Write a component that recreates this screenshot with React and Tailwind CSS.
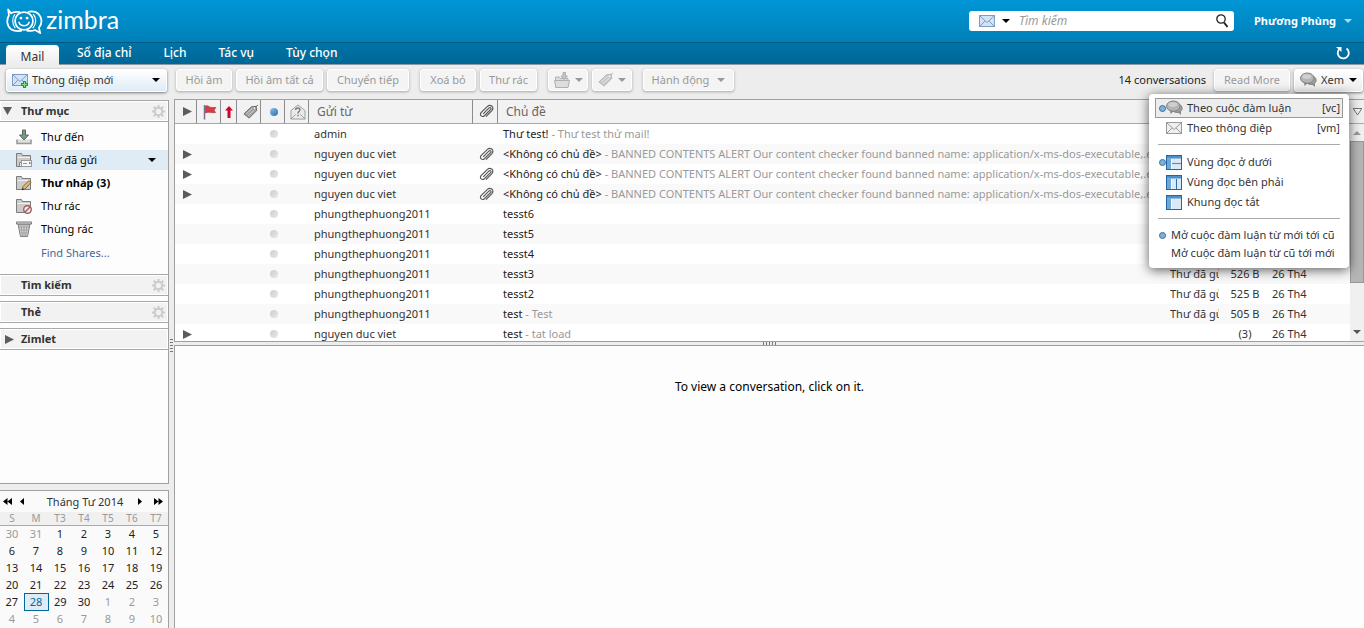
import { useState } from "react";

const stroke = { fill: "none", stroke: "currentColor" };

function Logo() {
  return (
    <svg width="37" height="26" viewBox="0 0 37 27" {...stroke} className="text-white" aria-hidden="true">
      <circle cx="18" cy="13.500" r="9.300" strokeWidth="1.800" />
      <path d="M14 4.300C10 3.600 6.500 4 4.500 5.500L1.500 1.500L2.300 7.500C-.5 12.500 .2 19 4.500 22C8 24.300 12 24.200 16 23.600" strokeWidth="1.800" strokeLinejoin="round" />
      <path d="M22 4.200C27 2.200 33 4.300 35 9C36.800 13 36 17.500 33.500 20.500L34.800 26L29.500 22.800C27 23.900 23.500 24 20.500 23.200" strokeWidth="1.800" strokeLinejoin="round" />
      <path d="M8.500 6.500C5.500 10 5.500 17 9 21M27.500 6.500C31 10 31 17 27 21" strokeWidth="1.200" />
      <circle cx="14.800" cy="10.500" r="1.500" fill="currentColor" stroke="none" />
      <circle cx="21.200" cy="10.500" r="1.500" fill="currentColor" stroke="none" />
      <path d="M12.800 15C14.500 19.500 21.500 19.500 23.200 15" strokeWidth="1.700" strokeLinecap="round" />
    </svg>
  );
}

function Envelope({ gray = false, plus = false }) {
  const line = gray ? "#9a9a9a" : "#7f9dc2";
  return (
    <svg width="16" height="16" viewBox="0 0 16 16" fill="none" aria-hidden="true">
      <rect x=".5" y="2.500" width="15" height="11" fill={gray ? "#efefef" : "#d3e3f6"} stroke={line} />
      <path d="M1 3L8 9.500L15 3M1 13L6 8M15 13L10 8" stroke={line} />
      {plus && <path d="M12.500 9v7M9 12.500h7" stroke="#1f9a35" strokeWidth="3.200" />}
      {plus && <path d="M12.500 10v5M10 12.500h5" stroke="#7ee37c" strokeWidth="1" />}
    </svg>
  );
}

function Down({ className = "" }) {
  return <svg width="8" height="4" viewBox="0 0 8 4" className={`shrink-0 ${className}`} aria-hidden="true"><path d="M0 0h8L4 4z" fill="currentColor" /></svg>;
}

function Right({ className = "" }) {
  return <svg width="9" height="9" viewBox="0 0 9 9" className={`shrink-0 text-[#5c5c5c] ${className}`} aria-hidden="true"><path d="M0 0L9 4.500L0 9z" fill="currentColor" /></svg>;
}

function Gear() {
  return (
    <svg width="13" height="13" viewBox="0 0 13 13" fill="none" stroke="#c9cbcd" aria-hidden="true">
      <circle cx="6.500" cy="6.500" r="3.700" strokeWidth="2" />
      <path d="M6.500 0v2.500M6.500 10.500V13M0 6.500h2.500M10.500 6.500H13M1.700 1.700l1.800 1.800M9.500 9.500l1.800 1.800M1.700 11.300l1.800-1.800M9.500 3.500l1.800-1.800" strokeWidth="2" />
    </svg>
  );
}

function Clip() {
  return (
    <svg width="15" height="15" viewBox="0 0 16 16" {...stroke} stroke="#555" strokeWidth="1.200" aria-hidden="true">
      <path d="M4.500 10.500L10.500 4.500C12 3 13.700 4.600 12.300 6L5.800 12.500C3.500 14.500 0 12 2.200 9.300L9 2.500C12-.2 16.500 3 14 6.700L7.500 13.500" />
    </svg>
  );
}

function Tag({ light = false }) {
  return (
    <svg width="16" height="16" viewBox="0 0 17 16" fill="none" aria-hidden="true">
      <path d="M1 10L9 2.500L14 2L14.500 6.500L6.500 14.500z" fill={light ? "#c9c9c9" : "#a0a0a0"} stroke={light ? "#b0b0b0" : "#666"} />
      <path d="M3.500 10L10 4M5.500 12L12 6" stroke={light ? "#e4e4e4" : "#cdcdcd"} />
      <circle cx="12.300" cy="3.800" r="1" fill="#fff" />
      <path d="M12.500 3.500L16 .5" stroke={light ? "#b5b5b5" : "#666"} />
    </svg>
  );
}

function Chat() {
  return (
    <svg width="17" height="16" viewBox="0 0 17 16" aria-hidden="true">
      <ellipse cx="11" cy="8.300" rx="5.200" ry="4.200" fill="#a2a2a2" stroke="#777" strokeWidth=".8" />
      <path d="M11.500 12L15 15V11z" fill="#8a8a8a" />
      <ellipse cx="7.300" cy="6.200" rx="6.800" ry="5.200" fill="#b4b4b4" stroke="#777" strokeWidth=".9" />
      <path d="M4 10.500L4.500 14L8 11z" fill="#8a8a8a" />
      <ellipse cx="6.800" cy="4.600" rx="4.500" ry="2.300" fill="#cfcfcf" />
    </svg>
  );
}

function Folder({ kind }) {
  if (kind === "inbox")
    return (
      <svg width="16" height="16" viewBox="0 0 16 16" aria-hidden="true">
        <path d="M1 10.500v4h14v-4" fill="#ddd" stroke="#9a9a9a" strokeWidth="1.600" />
        <path d="M6.500 1h3v5h3L8 11L3.500 6h3z" fill="#7d9985" stroke="#566e5e" />
      </svg>
    );
  if (kind === "trash")
    return (
      <svg width="16" height="16" viewBox="0 0 16 16" aria-hidden="true">
        <path d="M2 3l2.500 12.500h7L14 3z" fill="#cdcdcd" stroke="#808080" />
        <path d="M5 4l1.500 11M8 4v11M11 4L9.500 15M3 6h10M4 9h8.500M4.500 12h7" stroke="#999" strokeWidth=".7" />
        <path d="M.5 1h15v2H.5z" fill="#e4e4e4" stroke="#777" />
      </svg>
    );
  return (
    <svg width="16" height="16" viewBox="0 0 16 16" aria-hidden="true">
      <path d="M.5 14.500v-13h5l1 2h8v11z" fill="#cbcbcb" stroke="#7c7c7c" />
      <path d="M1.500 5.500h12.500" stroke="#f0f0f0" />
      {kind === "sent" && <g><path d="M3.500 14.500v-4h9" fill="#e8e8e8" stroke="#888" /><rect x="5.500" y="8.500" width="10" height="6" fill="#f8f8f8" stroke="#999" /><path d="M7 11.500h4" stroke="#8195b5" /><path d="M13 10h1.500v2H13z" fill="#4e88c0" /></g>}
      {kind === "draft" && <g><path d="M6 15l1-3.500L13 5.500l2 2L9 14z" fill="#e0b970" stroke="#67502e" strokeWidth=".8" /><path d="M6 15l2.200-.7L6.800 13z" fill="#222" /></g>}
      {kind === "spam" && <g><circle cx="11.500" cy="11.500" r="3.800" fill="#eee" stroke="#a45b5b" strokeWidth="1.400" /><path d="M14 9L9 14" stroke="#a45b5b" strokeWidth="1.400" /></g>}
    </svg>
  );
}

function Pane({ kind }) {
  return (
    <svg width="16" height="15" viewBox="0 0 16 15" aria-hidden="true">
      <rect x=".5" y=".5" width="15" height="14" fill="#dbe9f7" stroke="#2266a3" />
      <path d="M1 1h14v2.500H1z" fill="#4b91cd" />
      <path d="M1 3.500h4.500V14H1z" fill="#6aa9d6" />
      {kind === "bottom" && <path d="M6 8.500h9" stroke="#5b8fbd" strokeWidth="1.200" />}
      {kind === "right" && <path d="M10.500 4v10" stroke="#2d70ac" />}
      <path d="M5.500 4v10" stroke="#fff" />
    </svg>
  );
}

function Radio({ on }) {
  return <span className={`size-[7px] shrink-0 rounded-full ${on ? "border border-[#3f6c93] bg-[#7db2de]" : ""}`} />;
}

const btn = "flex h-[22px] shrink-0 items-center justify-center rounded-[3px] border border-white bg-[#f4f4f4] text-[#999] shadow-[0_1px_3px_rgba(0,0,0,0.3)]";

function Toolbar() {
  return (
    <div className="flex h-[34px] shrink-0 items-center justify-between bg-[#ededed] pr-px pb-1 pl-1.5">
      <div className="flex items-center gap-1">
        <button className="mr-[5px] flex h-[23px] w-[161px] items-center rounded-[3px] border border-white bg-linear-to-b from-white to-[#deebf6] pr-1.5 pl-[5px] text-[#333] shadow-[0_1px_3px_rgba(0,0,0,0.5)]">
          <Envelope plus />
          <span className="ml-1 flex-1 text-left">Thông điệp mới</span>
          <Down className="text-black" />
        </button>
        <button className={`${btn} w-[56px]`}>Hồi âm</button>
        <button className={`${btn} w-[87px]`}>Hồi âm tất cả</button>
        <button className={`${btn} mr-[7px] w-[82px]`}>Chuyển tiếp</button>
        <button className={`${btn} w-[56px]`}>Xoá bỏ</button>
        <button className={`${btn} mr-[7px] w-[57px]`}>Thư rác</button>
        <button aria-label="Di chuyển" className={`${btn} w-[40px] gap-1`}>
          <svg width="17" height="16" viewBox="0 0 17 16" fill="#ddd" stroke="#b0b0b0" aria-hidden="true">
            <path d="M1.500 15V5h4l1 1.500h7.500V15z" /><path d="M.5 8.500h15L14 15.500H2z" /><path d="M9 .5h2.500V4h2L10.200 7.500L7 4h2z" fill="#c5c5c5" />
          </svg>
          <Down />
        </button>
        <button aria-label="Gắn thẻ" className={`${btn} mr-[7px] w-[40px] gap-1`}><Tag light /><Down /></button>
        <button className={`${btn} w-[91px] gap-2`}>Hành động<Down /></button>
      </div>
      <div className="flex items-center gap-1">
        <span className="mr-1 text-[#222]">14 conversations</span>
        <button className={`${btn} w-[76px]`}>Read More</button>
        <button className="flex h-[23px] w-[69px] items-center rounded-[3px] border border-white bg-linear-to-b from-white to-[#ececec] px-[5px] text-[#333] shadow-[0_1px_3px_rgba(0,0,0,0.5)]">
          <Chat /><span className="ml-1 flex-1 text-left">Xem</span><Down className="text-black" />
        </button>
      </div>
    </div>
  );
}

const folders = [
  ["inbox", "Thư đến"],
  ["sent", "Thư đã gửi"],
  ["draft", "Thư nháp (3)"],
  ["spam", "Thư rác"],
  ["trash", "Thùng rác"],
];

function SectionHead({ label, arrow, gear }) {
  return (
    <h2 className="flex h-[22px] shrink-0 items-center border-y border-[#a9a9a9] bg-[#f2f2f2] pr-[3px] pl-[5px] font-bold text-[#333] shadow-[inset_0_0_0_1px_#fff]">
      <span className="flex w-4 items-center">
        {arrow === "down" && <svg width="9" height="8" viewBox="0 0 9 8" aria-hidden="true" className="-ml-0.5"><path d="M0 0h9L4.500 8z" fill="#5c5c5c" /></svg>}
        {arrow === "right" && <Right />}
      </span>
      <span className="flex-1">{label}</span>
      {gear && <Gear />}
    </h2>
  );
}

const days = [30, 31, ...Array.from({ length: 30 }, (_, i) => i + 1), ...Array.from({ length: 10 }, (_, i) => i + 1)];
const weeks = Array.from({ length: 6 }, (_, w) => days.slice(w * 7, w * 7 + 7));

function Calendar() {
  return (
    <section className="mt-1.5 h-[138px] shrink-0 overflow-hidden border-t border-r border-[#a0a0a0] bg-[#fafafa]">
      <div className="flex h-[21px] items-center pr-[5px] pl-[3px] text-black">
        <button aria-label="Năm trước"><svg width="9" height="7" viewBox="0 0 9 7" aria-hidden="true"><path d="M4.500 0v7L0 3.500zM9 0v7L4.500 3.500z" /></svg></button>
        <button aria-label="Tháng trước" className="ml-2"><svg width="4" height="7" viewBox="0 0 4 7" aria-hidden="true"><path d="M4 0v7L0 3.500z" /></svg></button>
        <span className="flex-1 pl-2 text-center text-[#333]">Tháng Tư 2014</span>
        <button aria-label="Tháng sau" className="mr-3"><svg width="4" height="7" viewBox="0 0 4 7" aria-hidden="true"><path d="M0 0v7L4 3.500z" /></svg></button>
        <button aria-label="Năm sau"><svg width="9" height="7" viewBox="0 0 9 7" aria-hidden="true"><path d="M0 0v7L4.500 3.500zM4.500 0v7L9 3.500z" /></svg></button>
      </div>
      <table className="w-full table-fixed border-collapse text-center leading-[15px] text-[#222]">
        <thead className="border-b border-[#a9a9a9] bg-[#f0f0f0] text-[#999]">
          <tr className="h-[13px]">{["S", "M", "T3", "T4", "T5", "T6", "T7"].map((d) => <th key={d} className="p-0 text-[10px] leading-[12px] font-normal">{d}</th>)}</tr>
        </thead>
        <tbody>
          {weeks.map((week, w) => (
            <tr key={w} className="h-[17px]">
              {week.map((d, i) => {
                const out = (w === 0 && i < 2) || (w === 4 && i > 3) || w === 5;
                const today = w === 4 && i === 1;
                return <td key={i} className={`p-0 ${out ? "text-[#999]" : ""} ${today ? "border border-[#006a99] bg-[#dfebf6] text-[#006a99]" : ""}`}>{d}</td>;
              })}
            </tr>
          ))}
        </tbody>
      </table>
    </section>
  );
}

function Sidebar() {
  return (
    <aside className="flex w-[169px] shrink-0 flex-col pt-px">
      <nav className="flex flex-1 flex-col border-r border-b border-[#a0a0a0] bg-[#fdfdfd]">
        <SectionHead label="Thư mục" arrow="down" gear />
        <ul className="flex flex-col gap-[3px] pt-[5px] pb-2.5 text-black">
          {folders.map(([kind, label]) => (
            <li key={kind} className={`flex h-[20px] items-center pl-4 ${kind === "sent" ? "bg-[#dfebf5]" : ""}`}>
              <Folder kind={kind} />
              <a href="#folder" className={`ml-[9px] flex-1 ${kind === "draft" ? "font-bold" : ""}`}>{label}</a>
              {kind === "sent" && <Down className="mr-3" />}
            </li>
          ))}
          <li className="flex h-[22px] items-center pl-[41px]"><a href="#shares" className="text-[#46689c]">Find Shares...</a></li>
        </ul>
        <div className="flex flex-col gap-[5px]">
          <SectionHead label="Tìm kiếm" gear />
          <SectionHead label="Thẻ" gear />
          <SectionHead label="Zimlet" arrow="right" />
        </div>
      </nav>
      <Calendar />
    </aside>
  );
}

const banned = "BANNED CONTENTS ALERT Our content checker found banned name: application/x-ms-dos-executable,.exe,.exe-ms";
const none = "<Không có chủ đề>";
const me = "phungthephuong2011";
const rows = [
  { from: "admin", subject: "Thư test!", more: "Thư test thử mail!" },
  { from: "nguyen duc viet", subject: none, more: banned, open: true, clip: true },
  { from: "nguyen duc viet", subject: none, more: banned, open: true, clip: true },
  { from: "nguyen duc viet", subject: none, more: banned, open: true, clip: true },
  { from: me, subject: "tesst6" },
  { from: me, subject: "tesst5" },
  { from: me, subject: "tesst4" },
  { from: me, subject: "tesst3", folder: "Thư đã gửi", size: "526 B", date: "26 Th4" },
  { from: me, subject: "tesst2", folder: "Thư đã gửi", size: "525 B", date: "26 Th4" },
  { from: me, subject: "test", more: "Test", folder: "Thư đã gửi", size: "505 B", date: "26 Th4" },
  { from: "nguyen duc viet", subject: "test", more: "tat load", open: true, size: "(3)", date: "26 Th4" },
];

const th = "border-r border-[#8c8c8c] p-0 font-normal";

function MailList() {
  return (
    <div className="flex h-[243px] shrink-0 overflow-hidden border-y border-l border-[#a0a0a0] bg-white">
      <table className="h-[241px] flex-1 table-fixed border-separate border-spacing-0 text-[#333]">
        <colgroup>
          <col className="w-[22px]" /><col className="w-[24px]" /><col className="w-[16px]" /><col className="w-[24px]" /><col className="w-[24px]" /><col className="w-[24px]" />
          <col className="w-[164px]" /><col className="w-[25px]" /><col /><col className="w-[56px]" /><col className="w-[46px]" /><col className="w-[84px]" />
        </colgroup>
        <thead>
          <tr className="h-[24px] bg-[#f2f2f2] text-left text-[12px] text-[#666] [&>th]:border-b [&>th]:border-b-[#a9a9a9]">
            <th aria-label="Mở rộng" className={`${th} pl-2`}><Right /></th>
            <th aria-label="Cờ" className={`${th} pl-1.5`}>
              <svg width="14" height="16" viewBox="0 0 14 16" aria-hidden="true"><path d="M1.500 1v14.500" stroke="#6f7795" strokeWidth="1.500" /><path d="M2.500 2C5 1 6 3 8 3.500L13 3.500L11 6L12.500 8.500C9 9.500 6 7 2.500 9z" fill="#d93a44" stroke="#a82c36" strokeWidth=".6" /></svg>
            </th>
            <th aria-label="Ưu tiên" className={`${th} pl-1`}><svg width="8" height="12" viewBox="0 0 8 12" aria-hidden="true"><path d="M4 0l4 4.500H5.500V12h-3V4.500H0z" fill="#d4002a" /></svg></th>
            <th aria-label="Thẻ" className={`${th} pl-1.5`}><Tag /></th>
            <th aria-label="Chưa đọc" className={`${th} pl-[9px]`}><span className="block size-2 rounded-full bg-linear-to-br from-[#8ec1ec] to-[#2b6cab]" /></th>
            <th aria-label="Trạng thái" className={`${th} pl-[5px]`}>
              <svg width="16" height="16" viewBox="0 0 17 17" fill="#eaeaea" stroke="#9a9a9a" aria-hidden="true"><path d="M1 7l7.500-6L16 7v9H1zM1 16l5-5M16 16l-5-5" /><path d="M6 6.500C6 3.500 11 3.500 10.500 6.500C10 8 8.500 8 8.500 10M8.500 11.500v1.500" fill="none" stroke="#777" strokeWidth="1.500" /></svg>
            </th>
            <th className={`${th} pl-2`}>Gửi từ</th>
            <th aria-label="Đính kèm" className={`${th} pl-1.5`}><Clip /></th>
            <th className="p-0 pl-2 font-normal" colSpan={4}>Chủ đề</th>
          </tr>
        </thead>
        <tbody className="leading-[18px]">
          {rows.map((r, i) => (
            <tr key={i} className={`h-[20px] whitespace-nowrap ${i % 2 ? "bg-[#f9f9f9]" : "bg-white"} [&>td]:p-0`}>
              <td><div className="pl-2">{r.open && <Right />}</div></td>
              <td /><td /><td />
              <td><div className="ml-[9px] size-2 rounded-full bg-linear-to-br from-[#cecece] to-[#e8e8e8]" /></td>
              <td />
              <td><div className="pl-[5px]">{r.from}</div></td>
              <td><div className="pl-1.5">{r.clip && <Clip />}</div></td>
              <td className="max-w-0"><div className="overflow-hidden pl-[5px] text-[#222]">{r.subject}{r.more && <span className="text-[#999]"> - {r.more}</span>}</div></td>
              <td><div className="ml-1.5 w-[49px] overflow-hidden">{r.folder}</div></td>
              <td><div className="pl-1 text-center">{r.size}</div></td>
              <td><div className="pl-1.5">{r.date}</div></td>
            </tr>
          ))}
        </tbody>
      </table>
      <div className="flex w-[14px] shrink-0 flex-col bg-[#f0f0f0] text-[#555]">
        <div className="flex h-[24px] items-center justify-center border-b border-[#a9a9a9]"><svg width="9" height="8" viewBox="0 0 9 8" fill="none" stroke="#777" aria-hidden="true"><path d="M0 .5h9M.5 1L4.500 7L8.500 1" /></svg></div>
        <div className="flex h-[17px] items-center justify-center"><Down className="rotate-180 text-[#999]" /></div>
        <div className="h-[142px] border border-[#989898] bg-[#b5b5b5]" />
        <div className="mt-auto flex h-[18px] items-center justify-center"><Down /></div>
      </div>
    </div>
  );
}

const item = "flex w-full items-center text-left text-[#333]";

function ViewMenu() {
  return (
    <div role="menu" className="absolute top-[94px] right-[15px] w-[200px] rounded-[4px] bg-white px-1.5 pt-1 pb-1.5 shadow-[0_2px_12px_rgba(0,0,0,0.65)]">
      <button role="menuitemradio" aria-checked="true" className={`${item} h-[20px] border border-[#999] bg-[#ededed] pr-0.5 pl-[3px]`}><Radio on /><Chat /><span className="ml-1 flex-1">Theo cuộc đàm luận</span><span>[vc]</span></button>
      <button role="menuitemradio" aria-checked="false" className={`${item} h-[20px] pr-[3px] pl-1`}><Radio /><Envelope gray /><span className="ml-[5px] flex-1">Theo thông điệp</span><span>[vm]</span></button>
      <hr className="mx-[3px] mt-1.5 mb-[7px] border-[#aaa]" />
      <button role="menuitemradio" aria-checked="true" className={`${item} h-[20px] pl-1`}><Radio on /><Pane kind="bottom" /><span className="ml-[5px]">Vùng đọc ở dưới</span></button>
      <button role="menuitemradio" aria-checked="false" className={`${item} h-[20px] pl-1`}><Radio /><Pane kind="right" /><span className="ml-[5px]">Vùng đọc bên phải</span></button>
      <button role="menuitemradio" aria-checked="false" className={`${item} h-[20px] pl-1`}><Radio /><Pane kind="off" /><span className="ml-[5px]">Khung đọc tắt</span></button>
      <hr className="mx-[3px] mt-1.5 mb-[7px] border-[#aaa]" />
      <button role="menuitemradio" aria-checked="true" className={`${item} h-[18px] pl-1`}><Radio on /><span className="ml-[5px] whitespace-nowrap">Mở cuộc đàm luận từ mới tới cũ</span></button>
      <button role="menuitemradio" aria-checked="false" className={`${item} h-[18px] pl-1`}><Radio /><span className="ml-[5px] whitespace-nowrap">Mở cuộc đàm luận từ cũ tới mới</span></button>
    </div>
  );
}

export default function App() {
  const [query, setQuery] = useState("");
  return (
    <div className="relative flex h-screen flex-col overflow-hidden bg-[#ededed] font-['Noto_Sans',sans-serif] text-[11px] leading-[18px]">
      <header className="flex h-[42px] shrink-0 items-center bg-linear-to-b from-[#0096d6] to-[#0080b8] pr-3 pl-[6px]">
        <Logo />
        <span className="ml-[3px] pb-1 font-['Lato',sans-serif] text-[25px] leading-[30px] text-white">zimbra</span>
        <div className="ml-auto flex h-[20px] w-[265px] items-center rounded-[3px] bg-white px-1.5 pl-[10px]">
          <Envelope /><Down className="mx-[7px] text-black" />
          <input aria-label="Tìm kiếm" placeholder="Tìm kiếm" value={query} onChange={(e) => setQuery(e.target.value)} className="min-w-0 flex-1 pl-0.5 text-[12px] placeholder:text-[#999] placeholder:italic focus:outline-none" />
          <svg width="12" height="14" viewBox="0 0 12 14" fill="none" stroke="#222" aria-hidden="true"><circle cx="5" cy="5" r="4.200" strokeWidth="1.300" /><path d="M8 8.500l3.500 4.500" strokeWidth="2" /></svg>
        </div>
        <button className="ml-5 flex items-center gap-2 font-bold text-white">Phương Phùng<Down className="text-[#a8ddf5]" /></button>
      </header>
      <nav className="flex h-[23px] shrink-0 items-end border-t border-b border-t-[#005a85] border-b-[#8c9ba3] bg-linear-to-b from-[#0074a8] to-[#006796] pr-3.5 pl-1.5 text-[12px] font-medium text-white">
        <a href="#mail" className="-mb-px flex h-[20px] w-[53px] items-center justify-center rounded-t-[4px] bg-linear-to-b from-white to-[#ededed] pt-1 font-normal text-[#333]">Mail</a>
        <div className="ml-[18px] flex gap-8 pb-0.5">
          <a href="#contacts">Sổ địa chỉ</a>
          <a href="#calendar">Lịch</a>
          <a href="#tasks">Tác vụ</a>
          <a href="#options">Tùy chọn</a>
        </div>
        <button aria-label="Làm mới" className="mb-1 ml-auto"><svg width="14" height="14" viewBox="0 0 14 14" fill="none" stroke="#fff" strokeWidth="1.800" aria-hidden="true"><path d="M10.500 2.500A5.500 5.500 0 1 1 3 3.500" /><path d="M0 1h5.500v5z" fill="#fff" stroke="none" /></svg></button>
      </nav>
      <Toolbar />
      <div className="flex min-h-0 flex-1">
        <Sidebar />
        <div className="flex w-[5px] shrink-0 flex-col items-center justify-center gap-[2px] pb-[36px]">
          {[0, 1, 2, 3, 4].map((i) => <span key={i} className="h-px w-[3px] bg-[#777]" />)}
        </div>
        <main className="flex min-w-0 flex-1 flex-col">
          <MailList />
          <div className="flex h-[3px] shrink-0 items-center justify-center gap-[2px]">
            {[0, 1, 2, 3, 4].map((i) => <span key={i} className="h-[3px] w-px bg-[#777]" />)}
          </div>
          <section className="flex-1 border-t border-l border-[#a0a0a0] bg-[#fdfdfd] pt-8 text-center text-[12px] text-black">To view a conversation, click on it.</section>
        </main>
      </div>
      <ViewMenu />
    </div>
  );
}
